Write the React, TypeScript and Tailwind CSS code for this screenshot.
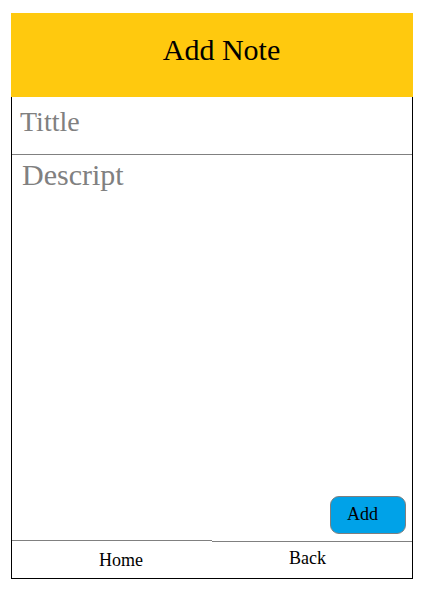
export default function App() {
  return (
    <div className="pt-[13px] pl-[11px] bg-white min-h-[596px] font-['Liberation_Serif','Times_New_Roman',serif]">
      <div className="w-[402px] flex flex-col">
        <div className="h-[84px] bg-[#FFC90E] flex justify-center pt-[20px] pl-[19px]">
          <span className="text-[30px] leading-[34px] text-black">Add Note</span>
        </div>
        <div className="border-l border-r border-b border-black flex flex-col">
          <div className="h-[58px] border-b border-[#808080] pt-[9px] pl-[8px]">
            <span className="text-[28px] leading-[32px] text-[#808080]">Tittle</span>
          </div>
          <div className="h-[385px] flex flex-col pt-[3px] pl-[10px]">
            <span className="text-[30px] leading-[34px] text-[#808080]">Descript</span>
            <div className="flex-1" />
            <div className="flex justify-end pr-[6px] pb-[6px]">
              <button className="w-[76px] h-[38px] bg-[#00A2E8] border border-[#7f7f7f] rounded-[9px] text-left pl-[16px] pb-[2px] text-[18px] leading-[21px] text-black font-['Liberation_Serif','Times_New_Roman',serif]">
                Add
              </button>
            </div>
          </div>
          <div className="grid grid-cols-2 h-[38px]">
            <div className="border-t border-[#808080] pt-[8px] pl-[87px]">
              <span className="text-[18px] leading-[21px] text-black">Home</span>
            </div>
            <div className="mt-[1px] border-t border-[#808080] pt-[5px] pl-[77px]">
              <span className="text-[18px] leading-[21px] text-black">Back</span>
            </div>
          </div>
        </div>
      </div>
    </div>
  );
}
